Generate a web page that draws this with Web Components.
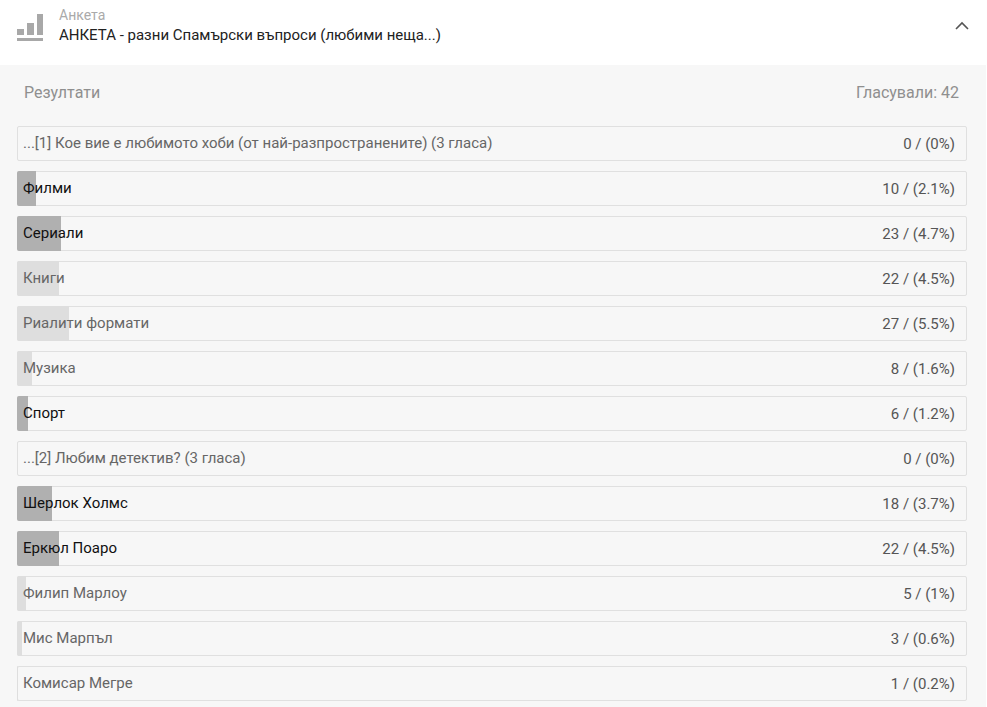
<!DOCTYPE html>
<html lang="bg"><head><meta charset="utf-8"><title>Анкета</title>
<style>html,body{margin:0;padding:0;background:#fff;overflow:hidden;height:707px}body{font-family:Roboto,"Liberation Sans",sans-serif}</style></head>
<body>
<poll-card>
<poll-row label="...[1] Кое вие е любимото хоби (от най-разпространените) (3 гласа)" value="0 / (0%)" pct="0"></poll-row>
<poll-row label="Филми" value="10 / (2.1%)" pct="2.1" strong></poll-row>
<poll-row label="Сериали" value="23 / (4.7%)" pct="4.7" strong></poll-row>
<poll-row label="Книги" value="22 / (4.5%)" pct="4.5"></poll-row>
<poll-row label="Риалити формати" value="27 / (5.5%)" pct="5.5"></poll-row>
<poll-row label="Музика" value="8 / (1.6%)" pct="1.6"></poll-row>
<poll-row label="Спорт" value="6 / (1.2%)" pct="1.2" strong></poll-row>
<poll-row label="...[2] Любим детектив? (3 гласа)" value="0 / (0%)" pct="0"></poll-row>
<poll-row label="Шерлок Холмс" value="18 / (3.7%)" pct="3.7" strong></poll-row>
<poll-row label="Еркюл Поаро" value="22 / (4.5%)" pct="4.5" strong></poll-row>
<poll-row label="Филип Марлоу" value="5 / (1%)" pct="1"></poll-row>
<poll-row label="Мис Марпъл" value="3 / (0.6%)" pct="0.6"></poll-row>
<poll-row label="Комисар Мегре" value="1 / (0.2%)" pct="0.2"></poll-row>
</poll-card>
<template id="card"><style>
:host{display:block;width:986px;font-family:Roboto,"Liberation Sans",sans-serif}
header{display:flex;align-items:flex-start;height:65px;background:#fff;box-sizing:border-box;padding:0 16px 0 17px}
svg.i{width:26px;height:28px;flex:none;margin:14px 16px 0 0}
.t{flex:1;padding-top:7px}
.s{font-size:14px;line-height:16px;color:#aaa}
.h{font-size:15px;line-height:20px;color:#222;margin-top:2px}
svg.c{width:16px;height:16px;flex:none;margin-top:19px}
main{background:#f7f7f7;padding:0 19px 6px 17px}
.top{display:flex;justify-content:space-between;height:61px;box-sizing:border-box;padding:18px 8px 0 7px;font-size:16px;line-height:20px;color:#8f8f8f}
.rows{display:flex;flex-direction:column;gap:10px}
</style>
<header>
<svg class="i" viewBox="0 0 26 28" aria-hidden="true"><path fill="#a8a8a8" d="M0 15h7v6H0zM10 9h7v12h-7zM20 0h6v21h-6zM0 24h26v3H0z"/></svg>
<div class="t"><div class="s">Анкета</div><div class="h">АНКЕТА - разни Спамърски въпроси (любими неща...)</div></div>
<svg class="c" viewBox="0 0 16 16" aria-hidden="true"><path fill="none" stroke="#555" stroke-width="1.600" d="M2 10 8 4l6 6"/></svg>
</header>
<main><div class="top"><span>Резултати</span><span>Гласували: 42</span></div><div class="rows"><slot></slot></div></main>
</template>
<template id="row"><style>
:host{display:block;font-family:Roboto,"Liberation Sans",sans-serif}
.r{position:relative;display:flex;justify-content:space-between;align-items:center;height:35px;box-sizing:border-box;border:1px solid #e0e0e0;border-radius:2px;padding:0 11px 0 5px;font-size:15px;color:#666}
.b{position:absolute;left:-1px;top:-1px;bottom:-1px;background:#dedede;border-radius:2px 0 0 2px}
:host([strong]) .b{background:#b0b0b0}
:host([strong]) .l{color:#111}
.l,.v{position:relative}
.l{padding-bottom:2px}
.v{color:#555}
</style><div class="r"><div class="b"></div><span class="l"></span><span class="v"></span></div></template>
<script>
class PollCard extends HTMLElement{constructor(){super();this.attachShadow({mode:'open'}).append(document.getElementById('card').content.cloneNode(true))}}
class PollRow extends HTMLElement{constructor(){super();this.attachShadow({mode:'open'}).append(document.getElementById('row').content.cloneNode(true))}
connectedCallback(){const s=this.shadowRoot;s.querySelector('.l').textContent=this.getAttribute('label');s.querySelector('.v').textContent=this.getAttribute('value');s.querySelector('.b').style.width=Math.floor(948*this.getAttribute('pct')/100)+'px'}}
customElements.define('poll-card',PollCard);customElements.define('poll-row',PollRow);
</script>
</body></html>
